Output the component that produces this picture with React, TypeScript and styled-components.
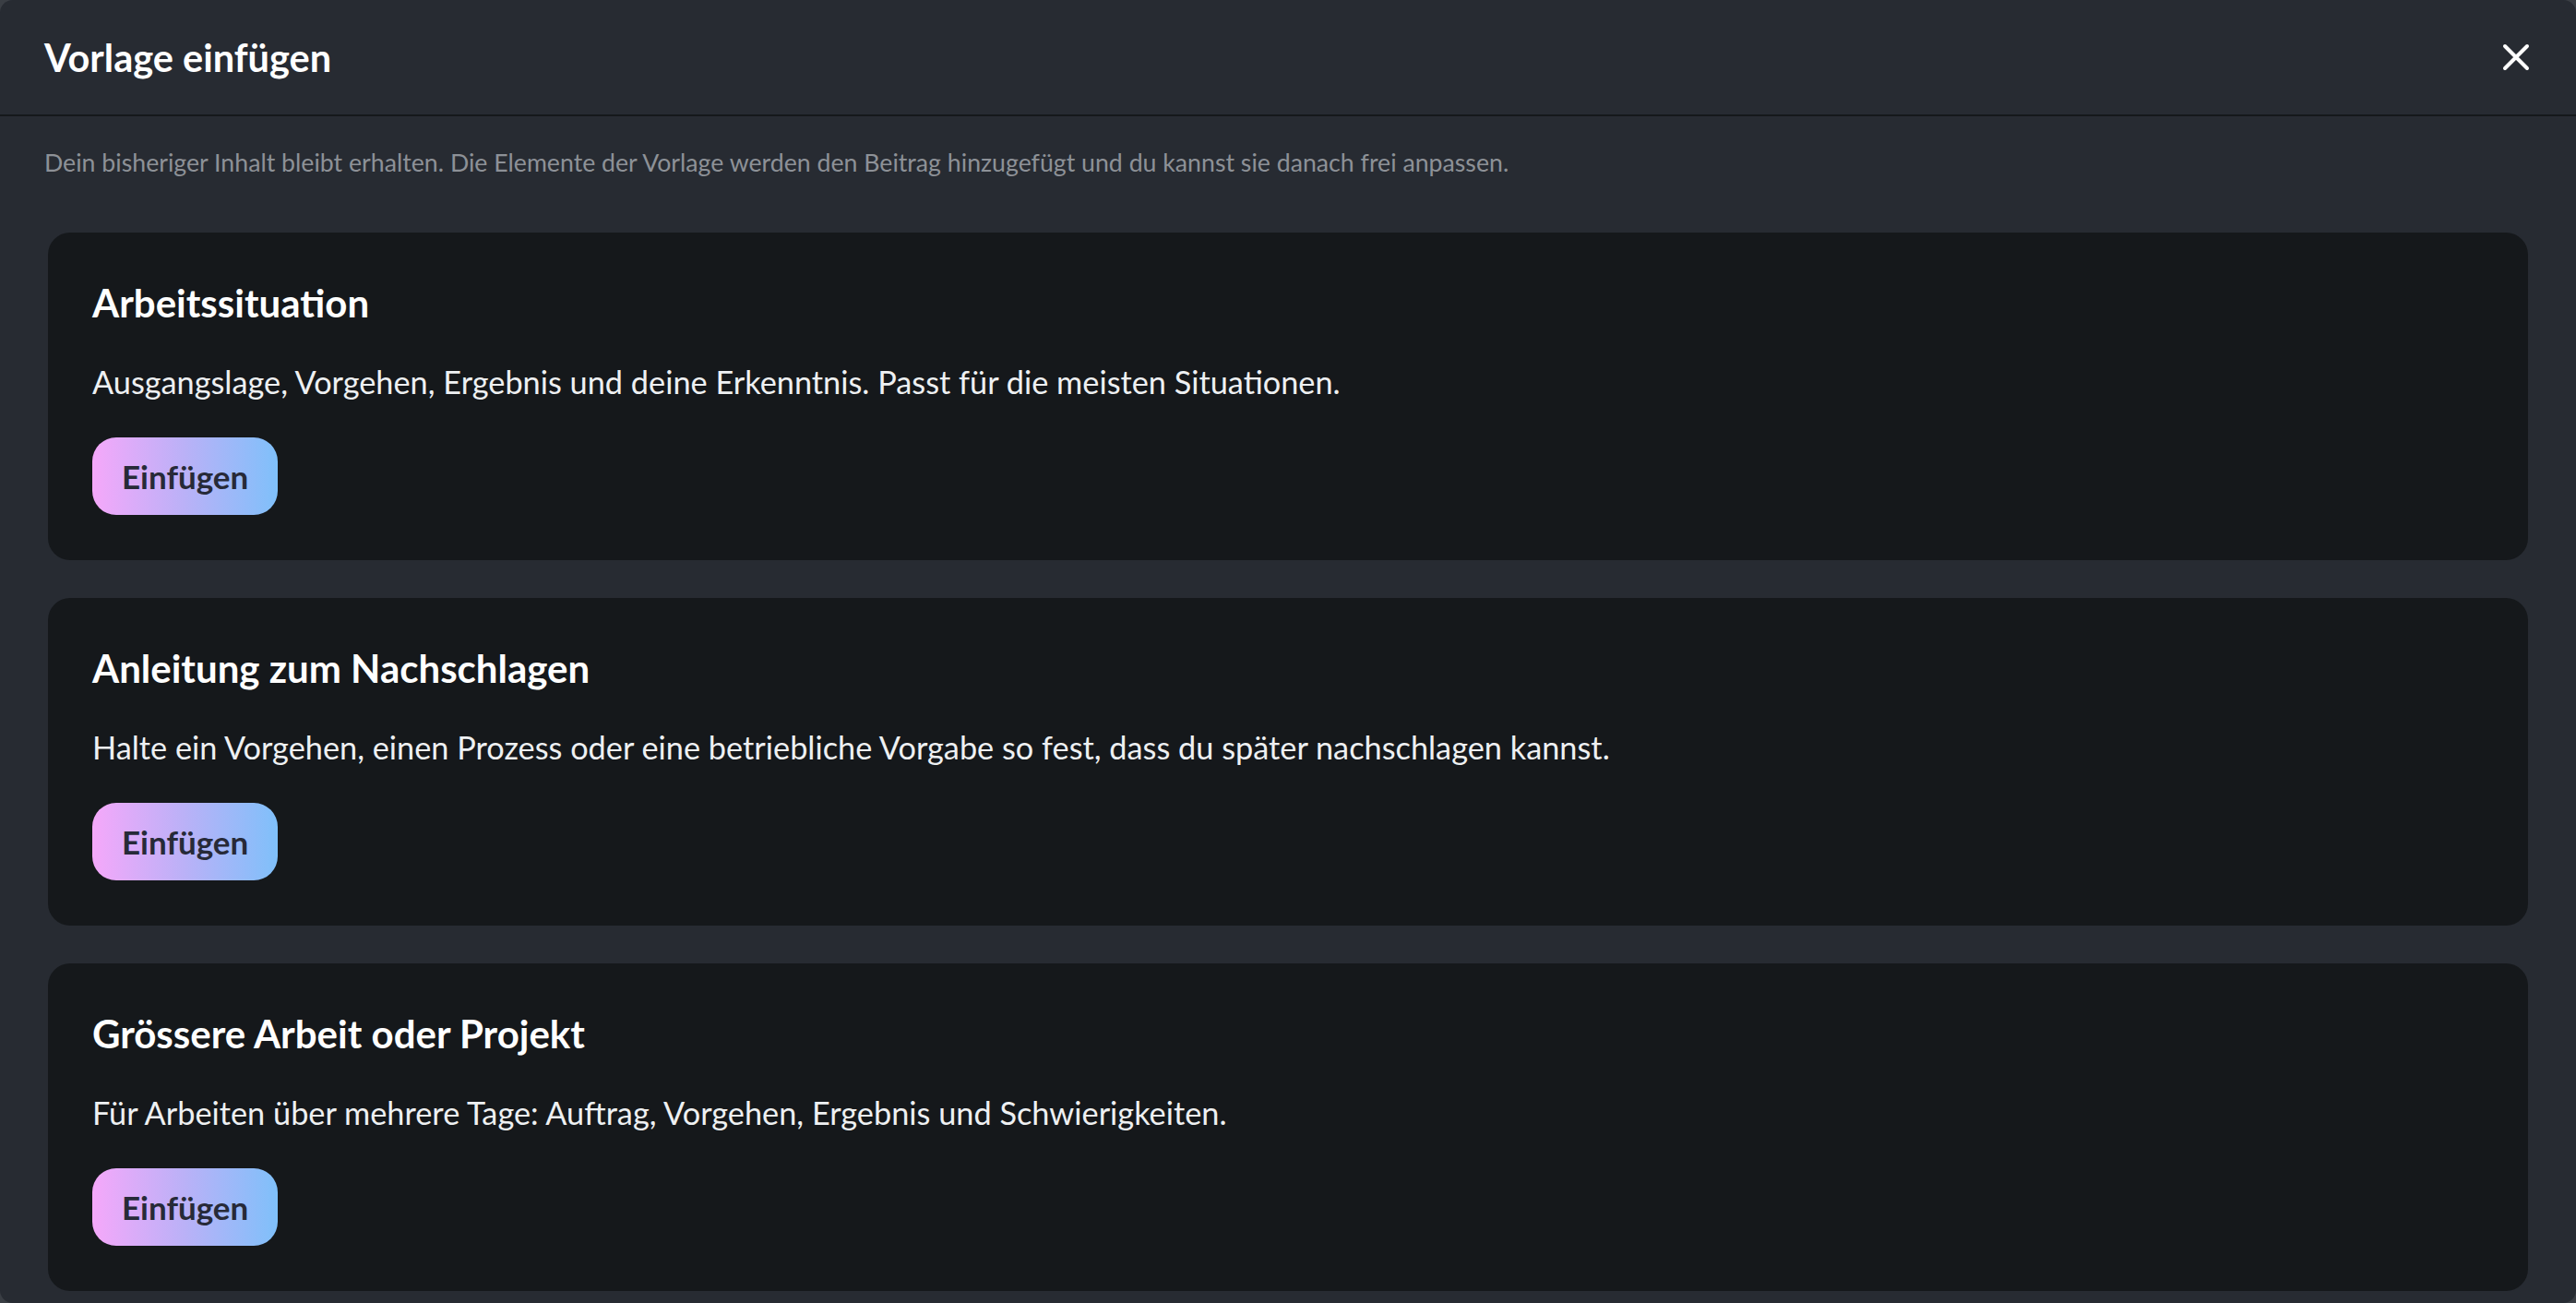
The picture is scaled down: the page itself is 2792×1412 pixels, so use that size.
import React from "react";
import styled, { createGlobalStyle } from "styled-components";

const GlobalStyle = createGlobalStyle`
  html, body {
    margin: 0;
    padding: 0;
    background: #3a3e44;
    overflow: hidden;
  }
  * { box-sizing: border-box; }
  body {
    font-family: Lato, "Noto Sans", "Liberation Sans", sans-serif;
  }
`;

const Dialog = styled.div`
  width: 2792px;
  height: 1412px;
  background: #272b32;
  border-radius: 14px;
  overflow: hidden;
  display: flex;
  flex-direction: column;
`;

const Header = styled.header`
  height: 126px;
  flex: none;
  display: flex;
  align-items: center;
  justify-content: space-between;
  padding: 0 42px 0 48px;
  border-bottom: 2px solid #15181b;
`;

const Title = styled.h2`
  margin: 0;
  color: #ffffff;
  font-size: 41.5px;
  font-weight: 700;
  letter-spacing: 0;
`;

const CloseButton = styled.button`
  width: 46px;
  height: 46px;
  border: 0;
  padding: 0;
  background: transparent;
  color: #ffffff;
  display: flex;
  align-items: center;
  justify-content: center;
  cursor: pointer;
`;

const Body = styled.div`
  flex: 1;
  overflow: hidden;
  padding: 0 52px 0 48px;
`;

const Intro = styled.p`
  margin: 0;
  height: 126px;
  display: flex;
  align-items: center;
  padding-bottom: 26px;
  color: #8d9197;
  font-size: 26.7px;
  line-height: 36px;
`;

const TemplateList = styled.div`
  display: flex;
  flex-direction: column;
  gap: 41px;
  padding-left: 4px;
`;

const Card = styled.section`
  background: #15181b;
  border-radius: 24px;
  padding: 48px 48px 49px 48px;
  display: flex;
  flex-direction: column;
  align-items: flex-start;
`;

const CardTitle = styled.h3`
  margin: 0 0 34px;
  color: #ffffff;
  font-size: 42px;
  line-height: 56px;
  font-weight: 700;
`;

const CardText = styled.p`
  margin: 0 0 36px;
  color: #eef0f2;
  font-size: 34.3px;
  line-height: 48px;
  font-weight: 400;
`;

const InsertButton = styled.button`
  height: 84px;
  padding: 0 32px;
  border: 0;
  border-radius: 26px;
  background: linear-gradient(90deg, #f5a8fa 0%, #bab1f7 50%, #7fc0fa 100%);
  color: #272a38;
  font-family: inherit;
  font-size: 35px;
  font-weight: 700;
  cursor: pointer;
`;

const templates = [
  {
    title: "Arbeitssituation",
    text: "Ausgangslage, Vorgehen, Ergebnis und deine Erkenntnis. Passt für die meisten Situationen.",
  },
  {
    title: "Anleitung zum Nachschlagen",
    text: "Halte ein Vorgehen, einen Prozess oder eine betriebliche Vorgabe so fest, dass du später nachschlagen kannst.",
  },
  {
    title: "Grössere Arbeit oder Projekt",
    text: "Für Arbeiten über mehrere Tage: Auftrag, Vorgehen, Ergebnis und Schwierigkeiten.",
  },
];

export default function App() {
  return (
    <>
      <GlobalStyle />
      <Dialog role="dialog" aria-label="Vorlage einfügen">
        <Header>
          <Title>Vorlage einfügen</Title>
          <CloseButton aria-label="Schliessen">
            <svg width="30" height="30" viewBox="0 0 30 30" fill="none">
              <path
                d="M3 3 L27 27 M27 3 L3 27"
                stroke="currentColor"
                strokeWidth="4"
                strokeLinecap="round"
              />
            </svg>
          </CloseButton>
        </Header>
        <Body>
          <Intro>
            Dein bisheriger Inhalt bleibt erhalten. Die Elemente der Vorlage werden den Beitrag hinzugefügt und du kannst sie danach frei anpassen.
          </Intro>
          <TemplateList>
            {templates.map((t) => (
              <Card key={t.title}>
                <CardTitle>{t.title}</CardTitle>
                <CardText>{t.text}</CardText>
                <InsertButton>Einfügen</InsertButton>
              </Card>
            ))}
          </TemplateList>
        </Body>
      </Dialog>
    </>
  );
}
